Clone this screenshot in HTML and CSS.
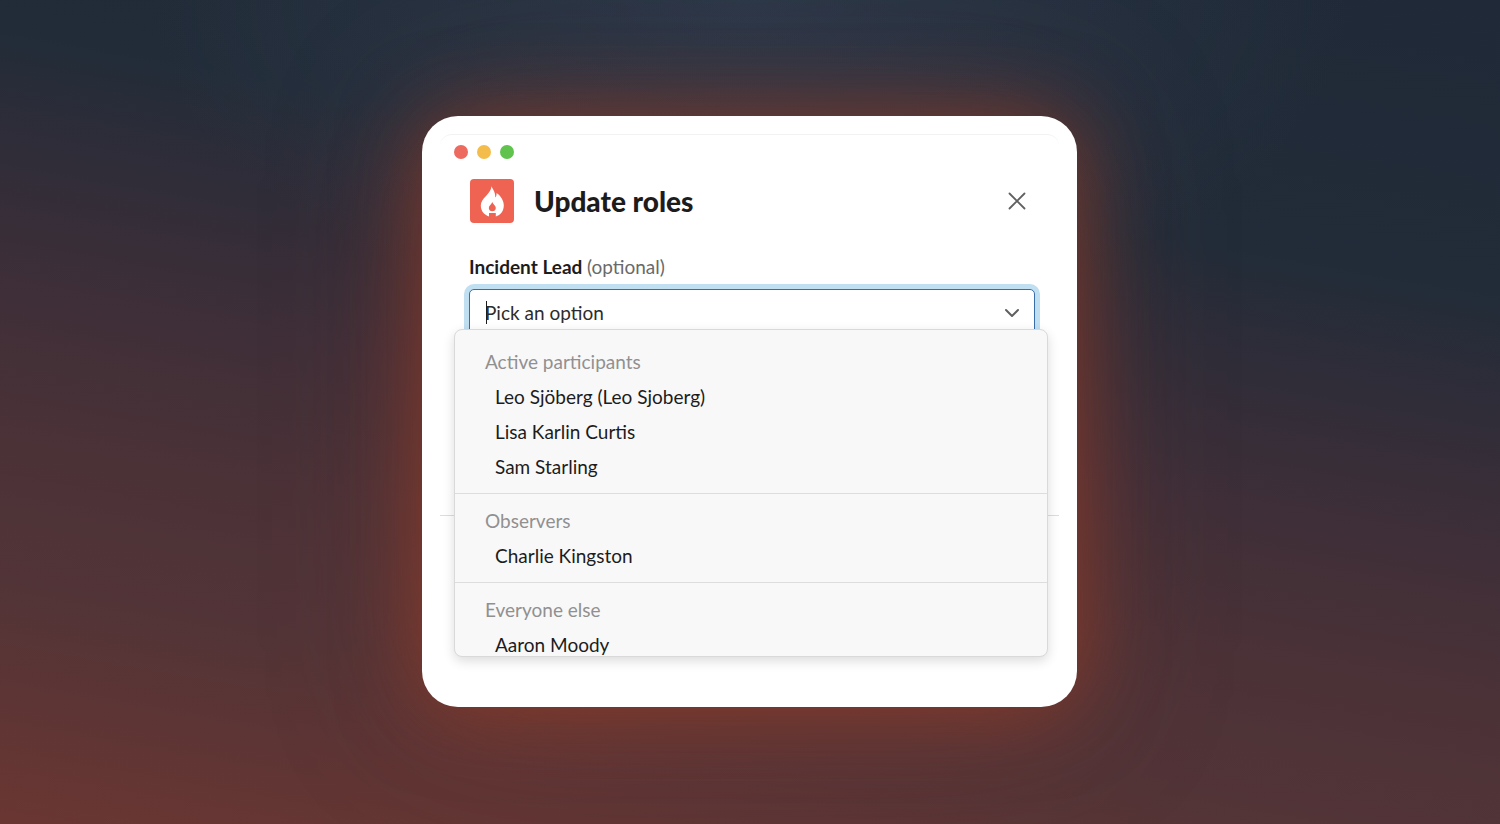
FILE: index.html
```html
<!DOCTYPE html>
<html lang="en">
<head>
<meta charset="utf-8">
<title>Update roles</title>
<link rel="stylesheet" href="styles.css">
</head>
<body>
<main class="stage">
  <section class="window" role="dialog" aria-labelledby="dialog-title">
    <div class="frame">
      <div class="dots" aria-hidden="true">
        <span class="dot dot-red"></span>
        <span class="dot dot-yellow"></span>
        <span class="dot dot-green"></span>
      </div>
      <header class="header">
        <svg class="logo" viewBox="0 0 44 44" aria-hidden="true">
          <rect width="44" height="44" rx="4" fill="#ee6352"/>
          <path fill="#fff" d="M21.6 7.2C22.6 10.4 25.3 12.2 25.3 18.4C26.2 17.6 26.6 15.8 26.6 13.9C30 16 33.8 20.9 33.8 26.2C33.8 31.8 30.8 36 25.8 37.4V34H19V37.4C14.2 36 10.8 31.8 10.8 26.5C10.8 19 20.5 15.5 21.6 7.2Z"/>
          <path fill="#ee6352" d="M22.3 23C22.9 25.2 25.8 26.6 25.8 29C25.8 31 24.3 32.3 22.3 32.3S18.8 31 18.8 29C18.8 26.6 21.7 25.2 22.3 23Z"/>
        </svg>
        <h1 class="title" id="dialog-title">Update roles</h1>
        <button class="close" type="button" aria-label="Close">
          <svg class="close-icon" viewBox="0 0 18 18" aria-hidden="true"><path d="M1.5 1.5l15 15M16.5 1.5l-15 15"/></svg>
        </button>
      </header>
      <div class="body">
        <label class="label" for="lead">Incident Lead <span class="optional">(optional)</span></label>
        <div class="field">
          <input class="input" id="lead" type="text" role="combobox" aria-expanded="true" aria-controls="people" placeholder="Pick an option">
          <span class="caret" aria-hidden="true"></span>
          <svg class="chevron" viewBox="0 0 14 8" aria-hidden="true"><path d="M1 1l6 6 6-6"/></svg>
          <div class="menu" id="people">
            <div class="group">
              <div class="group-name">Active participants</div>
              <button class="option" type="button">Leo Sjöberg (Leo Sjoberg)</button>
              <button class="option" type="button">Lisa Karlin Curtis</button>
              <button class="option" type="button">Sam Starling</button>
            </div>
            <div class="group">
              <div class="group-name">Observers</div>
              <button class="option" type="button">Charlie Kingston</button>
            </div>
            <div class="group">
              <div class="group-name">Everyone else</div>
              <button class="option" type="button">Aaron Moody</button>
            </div>
          </div>
        </div>
      </div>
      <footer class="footer"></footer>
    </div>
  </section>
</main>
</body>
</html>
```
FILE: styles.css
```css
* { box-sizing: border-box; }

body {
  margin: 0;
  font-family: Lato, "Noto Sans", sans-serif;
  font-size: 19px;
  color: #1d1c1d;
}

.stage {
  min-height: 100vh;
  padding: 0 1px 2px 0;
  display: flex;
  align-items: center;
  justify-content: center;
  background:
    radial-gradient(ellipse 40% 40% at 50% 0, rgba(80, 98, 124, 0.24), transparent),
    linear-gradient(190deg, #1f2937 0%, #222c39 27%, #312d38 39%, #402f38 52%, #4b3237 65%, #523437 78%, #6a3632 100%);
}

.window {
  width: 100%;
  max-width: 655px;
  padding: 18px;
  background: #fff;
  border-radius: 36px;
  box-shadow: 0 2px 80px rgba(165, 60, 30, 0.6), 0 2px 150px rgba(150, 70, 60, 0.35);
}

.frame {
  border: solid #f2f2f2;
  border-width: 1px 0;
  border-bottom-color: transparent;
  border-radius: 12px;
}

.dots {
  display: flex;
  gap: 9px;
  padding: 10px 14px 0;
}

.dot {
  width: 14px;
  height: 14px;
  border-radius: 50%;
}

.dot-red { background: #ed6a5e; }
.dot-yellow { background: #f4bd4b; }
.dot-green { background: #5fc34e; }

.header {
  display: flex;
  align-items: center;
  gap: 20px;
  padding: 20px 24px 0 30px;
}

.logo {
  width: 44px;
  height: 44px;
}

.title {
  flex: 1;
  margin: 0;
  font-size: 28px;
  line-height: 36px;
  font-weight: 900;
}

.close {
  display: flex;
  padding: 9px;
  border: 0;
  background: none;
}

.close-icon {
  width: 18px;
  height: 18px;
  fill: none;
  stroke: #616061;
  stroke-width: 1.8;
  stroke-linecap: round;
}

.body {
  padding: 32px 24px 178px 29px;
}

.label {
  display: block;
  margin-bottom: 10px;
  line-height: 24px;
  font-weight: 700;
}

.optional {
  font-weight: 400;
  color: #696969;
}

.field {
  position: relative;
}

.input {
  display: block;
  width: 100%;
  height: 48px;
  padding: 0 40px 0 15px;
  border: 1px solid #3a6ea8;
  border-radius: 5px;
  background: #fff;
  box-shadow: 0 0 0 5px #c0dff0;
  font: inherit;
  color: inherit;
  outline: 0;
}

.input::placeholder {
  color: #2c2b2c;
  opacity: 1;
}

.caret {
  position: absolute;
  top: 12px;
  left: 17px;
  width: 1px;
  height: 23px;
  background: #1d1c1d;
}

.chevron {
  position: absolute;
  top: 20px;
  right: 16px;
  width: 14px;
  height: 8px;
  overflow: visible;
  fill: none;
  stroke: #616061;
  stroke-width: 2;
  stroke-linecap: round;
  stroke-linejoin: round;
}

.menu {
  position: absolute;
  top: 40px;
  left: -15px;
  right: -13px;
  max-height: 328px;
  padding-top: 5px;
  overflow: hidden;
  border: 1px solid #d9d9d9;
  border-radius: 8px;
  background: #f8f8f8;
  box-shadow: 0 4px 12px rgba(0, 0, 0, 0.14);
}

.group {
  padding: 10px 0 9px;
}

.group + .group {
  border-top: 1px solid #dddddd;
}

.group-name {
  padding: 0 30px;
  line-height: 34px;
  color: #919091;
}

.option {
  display: block;
  width: 100%;
  padding: 0 40px;
  border: 0;
  background: none;
  font: inherit;
  line-height: 35px;
  color: inherit;
  text-align: left;
}

.footer {
  min-height: 173px;
  border-top: 1px solid #dddddd;
}
```
